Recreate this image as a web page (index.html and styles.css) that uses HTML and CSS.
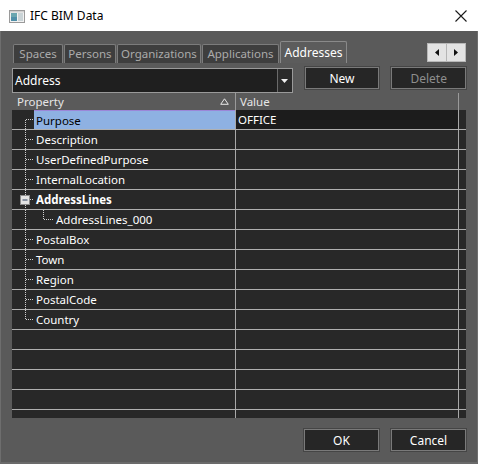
FILE: index.html
```html
<!DOCTYPE html>
<html>
<head>
<meta charset="utf-8">
<link rel="stylesheet" href="styles.css">
</head>
<body>
<div class="window">
  <div class="titlebar">
    <svg class="appicon" width="16" height="13" viewBox="0 0 16 13">
      <rect x="0.5" y="0.5" width="15" height="12" fill="#f2f2f2" stroke="#9a9a9a"/>
      <rect x="2" y="3" width="6" height="8" fill="#4f8fa8"/>
      <rect x="2" y="3" width="6" height="4" fill="#6aa6b0"/>
      <rect x="9" y="3" width="5" height="8" fill="#c9d3d6"/>
      <rect x="1" y="1" width="14" height="1.5" fill="#cfcfcf"/>
    </svg>
    <span class="title">IFC BIM Data</span>
    <svg class="close" width="12" height="12" viewBox="0 0 12 12">
      <path d="M0.5 0.5 L11.5 11.5 M11.5 0.5 L0.5 11.5" stroke="#1a1a1a" stroke-width="1.1"/>
    </svg>
  </div>
  <div class="body">
    <div class="tabrow">
      <div class="tabs">
        <div class="tab w-spaces">Spaces</div>
        <div class="tab w-persons">Persons</div>
        <div class="tab w-org">Organizations</div>
        <div class="tab w-app">Applications</div>
        <div class="tab active w-addr">Addresses</div>
      </div>
      <div class="scroller">
        <div class="sbtn"><svg width="4" height="7" viewBox="0 0 4 7"><path d="M4 0 L0 3.5 L4 7 Z" fill="#111"/></svg></div>
        <div class="sbtn"><svg width="4" height="7" viewBox="0 0 4 7"><path d="M0 0 L4 3.5 L0 7 Z" fill="#111"/></svg></div>
      </div>
    </div>
    <div class="toolbar">
      <div class="combo">
        <span class="combo-text">Address</span>
        <div class="combo-btn"><svg width="7" height="4" viewBox="0 0 7 4"><path d="M0 0 L7 0 L3.5 4 Z" fill="#f0f0f0"/></svg></div>
      </div>
      <div class="btn">New</div>
      <div class="btn disabled">Delete</div>
    </div>
    <div class="grid">
      <div class="ghead">
        <div class="hcell hprop"><span>Property</span>
          <svg width="9" height="7" viewBox="0 0 9 7"><path d="M4.5 0.8 L8.3 6.3 L0.7 6.3 Z" fill="none" stroke="#e8e8e8" stroke-width="1"/></svg>
        </div>
        <div class="hcell hval">Value</div>
        <div class="hfill"></div>
      </div>
      <div class="rows">
        <div class="row">
          <div class="pcell">
            <svg class="tree" width="22" height="19" viewBox="0 0 22 19"><path d="M13.5 10 V19 M14 9.5 H22" stroke="#cfcfcf" stroke-dasharray="1 1"/></svg>
            <span class="name selected">Purpose</span>
          </div>
          <div class="vcell">OFFICE</div><div class="vfill"></div>
        </div>
        <div class="row">
          <div class="pcell">
            <svg class="tree" width="22" height="19" viewBox="0 0 22 19"><path d="M13.5 0 V19 M14 9.5 H22" stroke="#cfcfcf" stroke-dasharray="1 1"/></svg>
            <span class="name">Description</span>
          </div>
          <div class="vcell"></div><div class="vfill"></div>
        </div>
        <div class="row">
          <div class="pcell">
            <svg class="tree" width="22" height="19" viewBox="0 0 22 19"><path d="M13.5 0 V19 M14 9.5 H22" stroke="#cfcfcf" stroke-dasharray="1 1"/></svg>
            <span class="name">UserDefinedPurpose</span>
          </div>
          <div class="vcell"></div><div class="vfill"></div>
        </div>
        <div class="row">
          <div class="pcell">
            <svg class="tree" width="22" height="19" viewBox="0 0 22 19"><path d="M13.5 0 V19 M14 9.5 H22" stroke="#cfcfcf" stroke-dasharray="1 1"/></svg>
            <span class="name">InternalLocation</span>
          </div>
          <div class="vcell"></div><div class="vfill"></div>
        </div>
        <div class="row">
          <div class="pcell">
            <svg class="tree" width="22" height="19" viewBox="0 0 22 19">
              <path d="M13.5 0 V5 M13.5 15 V19 M18 9.5 H22" stroke="#cfcfcf" stroke-dasharray="1 1"/>
              <rect x="8.5" y="5.5" width="9" height="9" fill="#e4e4e4" stroke="#8c8c8c"/>
              <path d="M10.5 10 H15.5" stroke="#2b3e5c" stroke-width="1"/>
            </svg>
            <span class="name bold">AddressLines</span>
          </div>
          <div class="vcell"></div><div class="vfill"></div>
        </div>
        <div class="row">
          <div class="pcell">
            <svg class="tree wide" width="42" height="19" viewBox="0 0 42 19"><path d="M13.5 0 V19 M31.5 0 V10 M32 9.5 H41" stroke="#cfcfcf" stroke-dasharray="1 1"/></svg>
            <span class="name">AddressLines_000</span>
          </div>
          <div class="vcell"></div><div class="vfill"></div>
        </div>
        <div class="row">
          <div class="pcell">
            <svg class="tree" width="22" height="19" viewBox="0 0 22 19"><path d="M13.5 0 V19 M14 9.5 H22" stroke="#cfcfcf" stroke-dasharray="1 1"/></svg>
            <span class="name">PostalBox</span>
          </div>
          <div class="vcell"></div><div class="vfill"></div>
        </div>
        <div class="row">
          <div class="pcell">
            <svg class="tree" width="22" height="19" viewBox="0 0 22 19"><path d="M13.5 0 V19 M14 9.5 H22" stroke="#cfcfcf" stroke-dasharray="1 1"/></svg>
            <span class="name">Town</span>
          </div>
          <div class="vcell"></div><div class="vfill"></div>
        </div>
        <div class="row">
          <div class="pcell">
            <svg class="tree" width="22" height="19" viewBox="0 0 22 19"><path d="M13.5 0 V19 M14 9.5 H22" stroke="#cfcfcf" stroke-dasharray="1 1"/></svg>
            <span class="name">Region</span>
          </div>
          <div class="vcell"></div><div class="vfill"></div>
        </div>
        <div class="row">
          <div class="pcell">
            <svg class="tree" width="22" height="19" viewBox="0 0 22 19"><path d="M13.5 0 V19 M14 9.5 H22" stroke="#cfcfcf" stroke-dasharray="1 1"/></svg>
            <span class="name">PostalCode</span>
          </div>
          <div class="vcell"></div><div class="vfill"></div>
        </div>
        <div class="row">
          <div class="pcell">
            <svg class="tree" width="22" height="19" viewBox="0 0 22 19"><path d="M13.5 0 V10 M14 9.5 H22" stroke="#cfcfcf" stroke-dasharray="1 1"/></svg>
            <span class="name">Country</span>
          </div>
          <div class="vcell"></div><div class="vfill"></div>
        </div>
        <div class="row"><div class="pcell"></div><div class="vcell"></div><div class="vfill"></div></div>
        <div class="row"><div class="pcell"></div><div class="vcell"></div><div class="vfill"></div></div>
        <div class="row"><div class="pcell"></div><div class="vcell"></div><div class="vfill"></div></div>
        <div class="row"><div class="pcell"></div><div class="vcell"></div><div class="vfill"></div></div>
        <div class="row"><div class="pcell"></div><div class="vcell"></div><div class="vfill"></div></div>
        <div class="row last"><div class="pcell"></div><div class="vcell"></div><div class="vfill"></div></div>
      </div>
    </div>
    <div class="footer">
      <div class="btn">OK</div>
      <div class="btn">Cancel</div>
    </div>
  </div>
</div>
</body>
</html>
```
FILE: styles.css
```css
* { box-sizing: border-box; }
html, body { margin: 0; padding: 0; }
body {
  font-family: "Noto Sans", "Open Sans", sans-serif;
  font-size: 11.5px;
  background: #5a5a5a;
}
.window {
  width: 478px;
  height: 464px;
  display: flex;
  flex-direction: column;
  overflow: hidden;
}
.titlebar {
  height: 31px;
  background: #ffffff;
  display: flex;
  align-items: center;
  padding: 0 11px 0 9px;
}
.appicon { margin-top: 1px; }
.title {
  margin-left: 5px;
  font-size: 12px;
  color: #000;
  flex: 1;
}
.close { margin-top: 1px; }
.body {
  flex: 1;
  background: #5a5a5a;
  border-left: 1px solid #6e6e6e;
  border-right: 1px solid #6e6e6e;
  border-bottom: 2px solid #6a6a6a;
  padding: 10px 11px 0 11px;
  display: flex;
  flex-direction: column;
}
.tabrow {
  height: 22px;
  display: flex;
  align-items: flex-end;
  justify-content: space-between;
}
.tabs {
  display: flex;
  align-items: flex-end;
  gap: 1px;
  padding-left: 1px;
}
.tab {
  height: 19px;
  background: #3e3e3e;
  border: 1px solid #7c7c7c;
  border-bottom: none;
  color: #ababab;
  display: flex;
  align-items: center;
  justify-content: center;
  line-height: 1;
  border-radius: 2px 2px 0 0;
}
.tab.active {
  height: 22px;
  background: #5c5c5c;
  color: #ffffff;
  border-color: #8a8a8a;
  font-size: 12px;
}
.w-spaces { width: 50px; }
.w-persons { width: 52px; }
.w-org { width: 84px; }
.w-app { width: 77px; }
.w-addr { width: 67px; }
.scroller {
  display: flex;
  align-self: flex-start;
  margin-top: 2px;
  width: 39px;
  height: 19px;
  border: 1px solid #b8b8b8;
  background: #e3e3e3;
}
.sbtn {
  flex: 1;
  display: flex;
  align-items: center;
  justify-content: center;
}
.sbtn + .sbtn { border-left: 1px solid #b5b5b5; }
.toolbar {
  margin-top: 5px;
  height: 25px;
  display: flex;
  align-items: flex-start;
}
.combo {
  width: 282px;
  height: 25px;
  border: 1px solid #9a9a9a;
  background: #1f1f1f;
  display: flex;
  align-items: stretch;
}
.combo-text {
  flex: 1;
  color: #ffffff;
  padding-left: 2px;
  display: flex;
  align-items: center;
  font-size: 12px;
}
.combo-btn {
  width: 15px;
  border-left: 1px solid #6a6a6a;
  background: #2a2a2a;
  display: flex;
  align-items: center;
  justify-content: center;
}
.btn {
  width: 75px;
  height: 22px;
  background: #262626;
  border: 1px solid #7a7a7a;
  box-shadow: 0 0 0 1px #454545;
  color: #ffffff;
  display: flex;
  align-items: center;
  justify-content: center;
  font-size: 12px;
}
.toolbar .btn { margin-left: 12px; margin-top: -1px; }
.btn.disabled { color: #8e8e8e; }
.grid {
  display: flex;
  flex-direction: column;
  width: 454px;
}
.ghead {
  height: 17px;
  display: flex;
  background: #5a5a5a;
  color: #e6e6e6;
}
.hcell {
  display: flex;
  align-items: center;
}
.hprop {
  width: 224px;
  padding: 0 6px 0 5px;
  justify-content: space-between;
  border-right: 1px solid #9a9a9a;
}
.hval {
  width: 223px;
  padding-left: 4px;
  border-right: 1px solid #9a9a9a;
  margin-bottom: 0;
}
.hfill { flex: 1; }
.rows {
  height: 308px;
  background: #282828;
  overflow: hidden;
}
.row {
  height: 20px;
  display: flex;
  border-bottom: 1px solid #b0b0b0;
  color: #ffffff;
}
.pcell {
  width: 224px;
  display: flex;
  align-items: stretch;
  border-right: 1px solid #a8a8a8;
}
.tree { flex: none; display: block; }
.name {
  flex: 1;
  padding-left: 2px;
  display: flex;
  align-items: center;
}
.name.selected {
  background: #8eb1e2;
  color: #000000;
  border-top: 1px solid #9b86d8;
}
.name.bold { font-weight: bold; }
.vcell {
  width: 223px;
  padding-left: 2px;
  display: flex;
  align-items: center;
  border-right: 1px solid #a8a8a8;
}
.row:first-child .vcell { background: #1c1c1c; }
.vfill { flex: 1; }
.footer {
  margin-top: 11px;
  display: flex;
  justify-content: flex-end;
  gap: 12px;
  padding-right: 0;
}
```
